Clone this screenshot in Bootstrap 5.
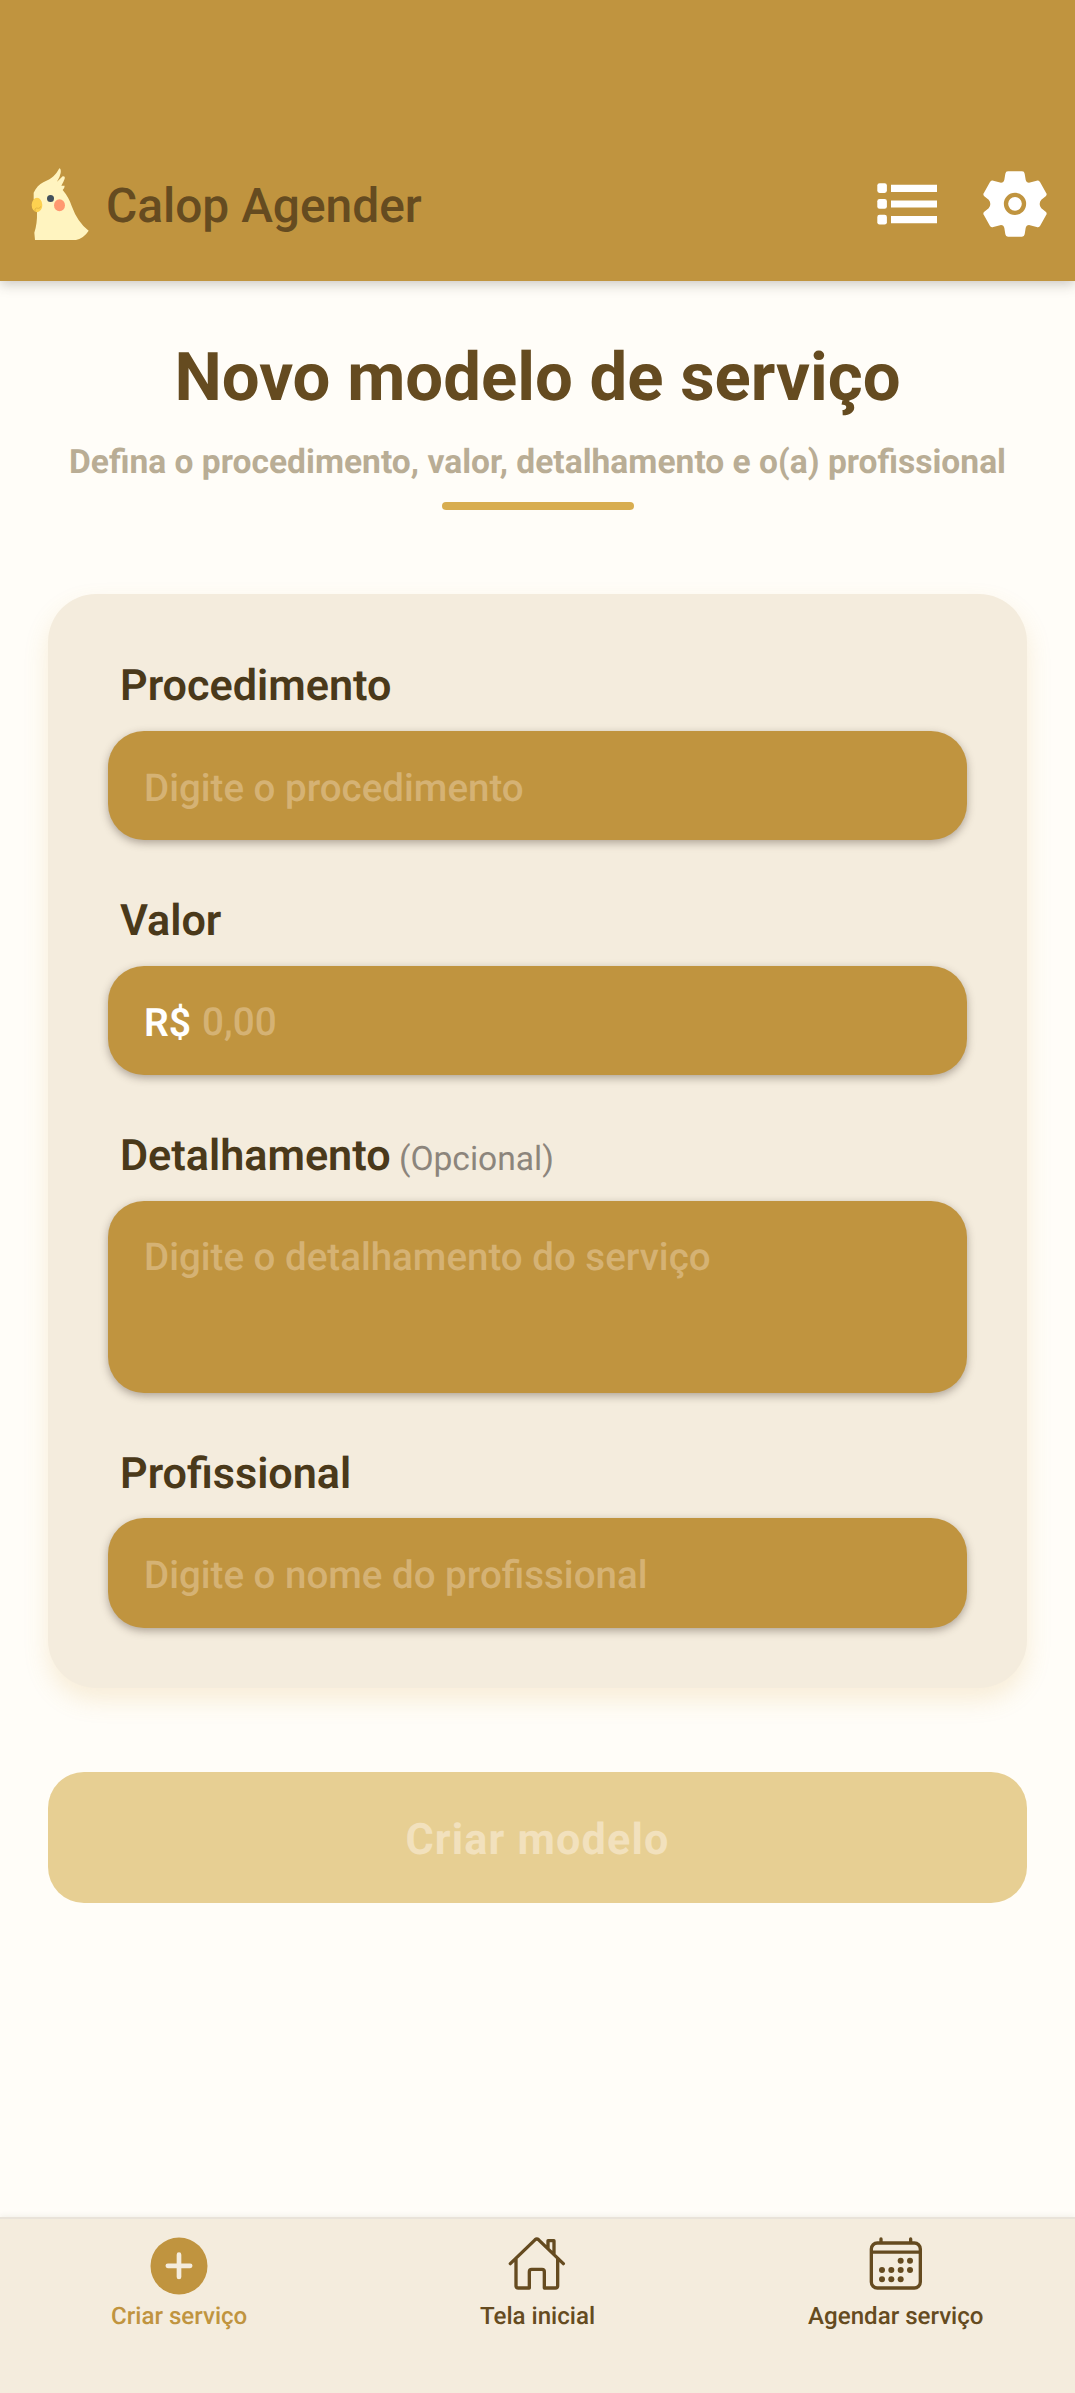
<!DOCTYPE html>
<html lang="pt-BR">
<head>
<meta charset="utf-8">
<meta name="viewport" content="width=device-width, initial-scale=1">
<title>Calop Agender</title>
<link rel="stylesheet" href="https://cdn.jsdelivr.net/npm/bootstrap@5.3.0/dist/css/bootstrap.min.css">
<style>
  body { font-family: Roboto, "Noto Sans", sans-serif; background: #fffdf8; color: #654b20; text-rendering: geometricPrecision; }
  input, textarea, button { text-rendering: inherit; }
  .app-shell { min-height: 2393px; }
  .app-header { height: 280.7px; padding: 127px 28px 0 30px; background: #c0943f; box-shadow: 0 3px 12px rgba(60, 55, 45, .28); }
  .app-title { font-size: 47.85px; font-weight: 500; line-height: 56px; margin: 5px 0 0 14px; color: #654b20; }
  .header-actions { gap: 45.7px; }
  .page-title { font-size: 67.1px; font-weight: 700; line-height: 80px; margin-top: 57.4px; color: #654b20; }
  .page-sub { font-size: 33.6px; font-weight: 700; line-height: 40px; margin-top: 25.2px; color: #b9ad95; }
  .title-rule { width: 192px; height: 8px; border-radius: 4px; margin-top: 18.9px; background: #d8ad50; }
  .form-card { border: 0; border-radius: 48px; margin: 83.5px 48px 0; padding: 66.3px 60px 60px; background: #f4ecdd; box-shadow: 0 12px 24px rgba(214, 160, 60, .17); }
  .field-group { margin-bottom: 54.9px; }
  .field-label { display: block; height: 52px; font-size: 43.15px; font-weight: 600; line-height: 52px; padding-left: 12px; margin-bottom: 18.8px; color: #4a391a; }
  .field-label span { font-size: 33.6px; font-weight: 400; line-height: 1; color: #8c857c; }
  .field-box { height: 109.4px; padding: 5.5px 36px 0; border: 0; border-radius: 36px; background: #c0943f; box-shadow: 0 3px 9px rgba(70, 55, 45, .4); font-size: 38.5px; font-weight: 500; line-height: 46px; color: #fff; resize: none; }
  .field-box:focus { background: #c0943f; color: #fff; }
  .field-area { height: 191.8px; padding-top: 34.5px; overflow: hidden; }
  .field-box::placeholder, .money-input::placeholder { color: #d5b274; opacity: 1; }
  .currency { width: 58px; font-size: 39px; font-weight: 600; }
  .money-input { min-width: 0; padding: 0; border: 0; outline: 0; background: transparent; color: #fff; font-weight: 500; font-size: 38.7px; line-height: 46px; }
  .submit-btn { height: 131px; margin: 84px 48px 0; padding: 7px 0 0; border: 0; border-radius: 36px; font-size: 43.2px; font-weight: 700; letter-spacing: 1.15px; }
  .submit-btn:disabled { background: #e7cf93; color: #f2e1bd; opacity: 1; }
  .tab-bar { height: 176.3px; padding-top: 18px; border-top: 2px solid #e9e3d9; background: #f4ecdd; box-shadow: 0 -1px 6px rgba(60, 50, 30, .07); }
  .tab-link { color: #654b20; font-size: 24.1px; font-weight: 500; line-height: 28px; text-decoration: none; }
  .tab-link svg { display: block; margin-bottom: 7px; }
  .tab-active { color: #c0943f; }
</style>
</head>
<body>
<div class="app-shell d-flex flex-column">
  <header class="app-header d-flex align-items-center justify-content-between">
    <div class="d-flex align-items-center">
      <svg width="62" height="74" viewBox="90 80 186 222" aria-hidden="true">
        <path d="M105 299L103 277Q112 250 111 215L101 175V157C108 142 118 132 130 126C157 114 166 106 178 84Q184 86 182 98Q180 110 171 124L188 108Q196 107 194 115Q190 126 184 136L194 136Q194 143 188 149Q206 170 215 197Q233 247 266 271Q252 293 228 299Z" fill="#fff4c0"/>
        <ellipse cx="111" cy="194" rx="16" ry="21.500" fill="#fdd150"/>
        <path d="M105 214V206Q110 201 115 204Q121 204 122 198" fill="none" stroke="#d9aa3c" stroke-width="2"/>
        <circle cx="151.500" cy="174.500" r="10.500" fill="#43505c"/>
        <ellipse cx="178.500" cy="195" rx="16.500" ry="18" fill="#ff9870"/>
      </svg>
      <h1 class="app-title">Calop Agender</h1>
    </div>
    <div class="header-actions d-flex align-items-center">
      <svg width="60" height="42" viewBox="0 0 60 42" fill="#fff" aria-label="Lista">
        <rect x="0.300" y="0.200" width="9.600" height="9.700" rx="2.300"/><rect x="0.300" y="16" width="9.600" height="9.700" rx="2.300"/><rect x="0.300" y="31.800" width="9.600" height="9.700" rx="2.300"/>
        <path d="M14 1.700h46v7.200H14zM14 17.400h46v7.200H14zM14 33h46v7.200H14z"/>
      </svg>
      <svg width="64" height="66" viewBox="429 93 192 198" aria-label="Ajustes">
        <path fill="#fff" d="M504 94H546Q553 94 554 101L557 119Q559 128 567 128L590 122Q596 121 600 126L618 158Q622 163 618 168L604 179Q599 184 599 192Q599 200 604 205L618 216Q622 221 618 226L600 258Q596 263 590 261L567 255Q559 255 557 264L554 283Q553 290 546 290H504Q497 290 496 283L493 264Q491 255 483 255L460 261Q454 263 450 258L432 226Q428 221 432 216L446 205Q451 200 451 192Q451 184 446 179L432 168Q428 163 432 158L450 126Q454 121 460 122L483 128Q491 128 493 119L496 101Q497 94 504 94Z"/>
        <circle cx="525" cy="191.500" r="27" fill="none" stroke="#c0943f" stroke-width="13"/>
      </svg>
    </div>
  </header>

  <main class="flex-grow-1 d-flex flex-column">
    <h2 class="page-title text-center mb-0">Novo modelo de serviço</h2>
    <p class="page-sub text-center mb-0">Defina o procedimento, valor, detalhamento e o(a) profissional</p>
    <div class="title-rule mx-auto"></div>
    <form class="d-flex flex-column">
      <div class="card form-card">
        <div class="field-group">
          <label class="field-label" for="proc">Procedimento</label>
          <input id="proc" class="form-control field-box" placeholder="Digite o procedimento">
        </div>
        <div class="field-group">
          <label class="field-label" for="valor">Valor</label>
          <div class="form-control field-box d-flex align-items-center">
            <span class="currency">R$</span>
            <input id="valor" class="money-input flex-grow-1" placeholder="0,00">
          </div>
        </div>
        <div class="field-group">
          <label class="field-label" for="det">Detalhamento<span> (Opcional)</span></label>
          <textarea id="det" class="form-control field-box field-area d-block" placeholder="Digite o detalhamento do serviço"></textarea>
        </div>
        <div>
          <label class="field-label" for="prof">Profissional</label>
          <input id="prof" class="form-control field-box" placeholder="Digite o nome do profissional">
        </div>
      </div>
      <button class="btn submit-btn" type="button" disabled>Criar modelo</button>
    </form>
  </main>

  <nav class="tab-bar row g-0">
    <a class="tab-link tab-active col d-flex flex-column align-items-center" href="#">
      <svg width="58" height="58" viewBox="452 112 174 174"><circle cx="539" cy="199" r="85.500" fill="#c0943f"/><path d="M505.500 198.500H572.500M539 165V232" stroke="#f4ecdd" stroke-width="14" stroke-linecap="round"/></svg>
      Criar serviço
    </a>
    <a class="tab-link col d-flex flex-column align-items-center" href="#">
      <svg width="58" height="58" viewBox="207 112 174 174" fill="none" stroke="currentColor" stroke-width="10" stroke-linecap="round" stroke-linejoin="round"><path d="M214 192L288 120.500Q293.500 115.500 299 120.500L373 192M231 177V258Q231 265 238 265H271V216Q271 209 278 209H309Q316 209 316 216V265H349Q356 265 356 258V177M327 145V123H345V163"/></svg>
      Tela inicial
    </a>
    <a class="tab-link col d-flex flex-column align-items-center" href="#">
      <svg width="58" height="58" viewBox="262 112 174 174"><g fill="none" stroke="currentColor" stroke-width="10"><rect x="275" y="130" width="147" height="135" rx="18"/><path d="M275 157.500H422"/><path d="M304 118V128M393 118V128" stroke-linecap="round"/></g><g fill="currentColor"><circle cx="363" cy="183" r="9"/><circle cx="391" cy="183" r="9"/><circle cx="307" cy="211" r="9"/><circle cx="335" cy="211" r="9"/><circle cx="363" cy="211" r="9"/><circle cx="391" cy="211" r="9"/><circle cx="307" cy="239" r="9"/><circle cx="335" cy="239" r="9"/><circle cx="363" cy="239" r="9"/></g></svg>
      Agendar serviço
    </a>
  </nav>
</div>
<script src="https://cdn.jsdelivr.net/npm/bootstrap@5.3.0/dist/js/bootstrap.bundle.min.js"></script>
</body>
</html>
